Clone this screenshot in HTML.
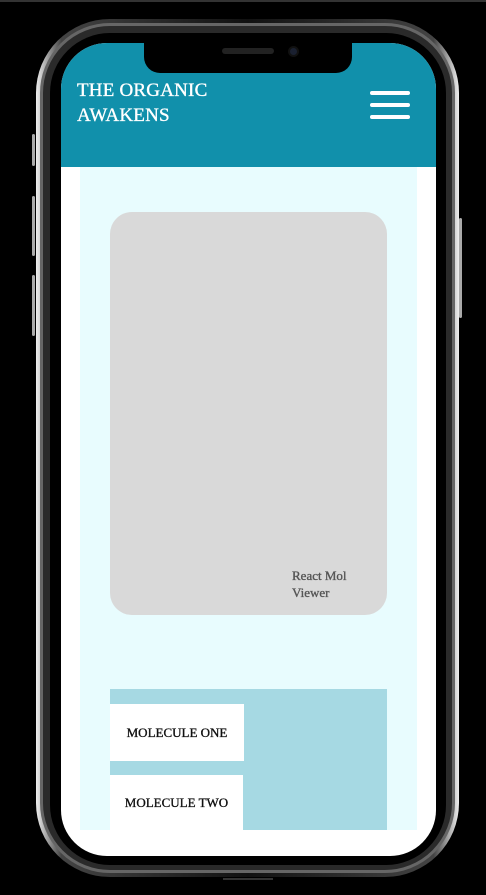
<!DOCTYPE html>
<html><head><meta charset="utf-8"><style>
*{margin:0;padding:0;box-sizing:border-box}
body{width:486px;height:895px;background:#000;position:relative;overflow:hidden;font-family:"Liberation Serif",serif}
.abs{position:absolute}
.frame{left:36px;top:19px;width:423px;height:858px;border-radius:74px;background:linear-gradient(90deg,#eee,#999 3%,#444 6%,#111 50%,#444 94%,#999 97%,#eee);}
.frame2{left:40px;top:23px;width:415px;height:850px;border-radius:70px;background:#2a2a2a;border:3px solid #666}
.frame3{left:50px;top:33px;width:396px;height:832px;border-radius:60px;background:#000}
.screen{left:61px;top:43px;width:375px;height:813px;border-radius:46px;background:#fff;overflow:hidden}
.btn{background:#aaa;border-radius:2px;width:3px}
.t{-webkit-text-stroke:0.35px currentColor}
</style></head><body>
<div class="abs" style="left:0;top:0;width:486px;height:2px;background:#333"></div>
<div class="abs btn" style="left:32px;top:134px;height:32px"></div>
<div class="abs btn" style="left:32px;top:196px;height:60px"></div>
<div class="abs btn" style="left:32px;top:275px;height:61px"></div>
<div class="abs btn" style="left:459px;top:218px;height:100px"></div>
<div class="abs frame"></div>
<div class="abs frame2"></div>
<div class="abs frame3"></div>
<div class="abs screen">
  <div class="abs" style="left:0;top:0;width:375px;height:124px;background:#1190ab"></div>
  <div class="abs t" style="left:16px;top:35px;color:#fff;font-size:19px;line-height:25px;letter-spacing:0.2px">THE ORGANIC<br>AWAKENS</div>
  <div class="abs" style="left:309px;top:48px;width:40px;height:4px;background:#fff;border-radius:2px"></div>
  <div class="abs" style="left:309px;top:60px;width:40px;height:4px;background:#fff;border-radius:2px"></div>
  <div class="abs" style="left:309px;top:72px;width:40px;height:4px;background:#fff;border-radius:2px"></div>
  <div class="abs" style="left:19px;top:124px;width:337px;height:663px;background:#e8fcfe"></div>
  <div class="abs" style="left:49px;top:169px;width:277px;height:403px;background:#d9d9d9;border-radius:22px"></div>
  <div class="abs t" style="left:231px;top:524px;color:#555;font-size:13px;line-height:17px">React Mol<br>Viewer</div>
  <div class="abs" style="left:49px;top:646px;width:277px;height:141px;background:#a6d9e3"></div>
  <div class="abs t" style="left:49px;top:661px;width:134px;height:57px;background:#fff;font-size:13px;line-height:57px;text-align:center;color:#111">MOLECULE ONE</div>
  <div class="abs t" style="left:49px;top:732px;width:133px;height:55px;background:#fff;font-size:13px;line-height:55px;text-align:center;color:#111">MOLECULE TWO</div>
</div>
<div class="abs" style="left:144px;top:40px;width:208px;height:33px;background:#000;border-radius:0 0 16px 16px"></div>
<div class="abs" style="left:222px;top:48px;width:52px;height:6px;background:#222;border-radius:3px"></div>
<div class="abs" style="left:288px;top:46px;width:11px;height:11px;background:#1a2030;border-radius:50%;border:2px solid #111"></div>
<div class="abs" style="left:223px;top:878px;width:50px;height:2px;background:#333"></div>
</body></html>
